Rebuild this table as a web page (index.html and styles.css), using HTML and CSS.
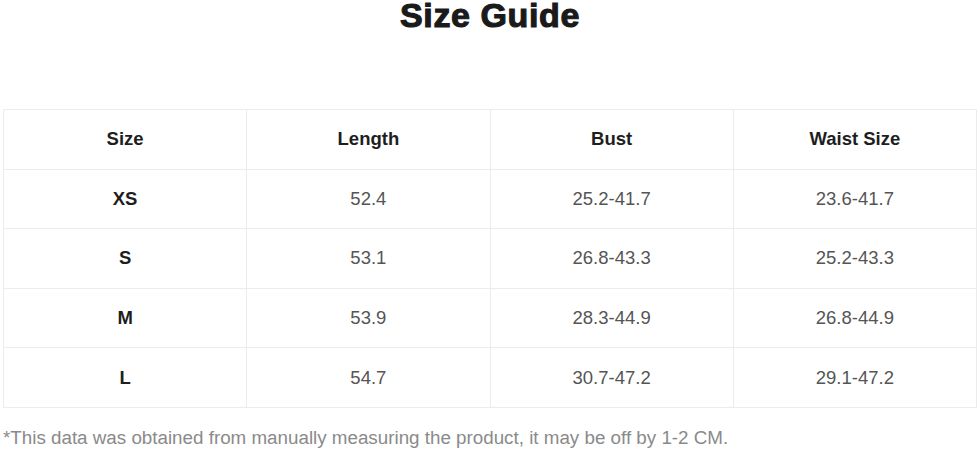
FILE: index.html
```html
<!DOCTYPE html>
<html>
<head>
<meta charset="utf-8">
<link rel="stylesheet" href="styles.css">
</head>
<body>
<div class="page">
  <h1 class="title">Size Guide</h1>
  <table class="sizes">
    <thead>
      <tr><th>Size</th><th>Length</th><th>Bust</th><th>Waist Size</th></tr>
    </thead>
    <tbody>
      <tr><th>XS</th><td>52.4</td><td>25.2-41.7</td><td>23.6-41.7</td></tr>
      <tr><th>S</th><td>53.1</td><td>26.8-43.3</td><td>25.2-43.3</td></tr>
      <tr><th>M</th><td>53.9</td><td>28.3-44.9</td><td>26.8-44.9</td></tr>
      <tr><th>L</th><td>54.7</td><td>30.7-47.2</td><td>29.1-47.2</td></tr>
    </tbody>
  </table>
  <p class="note">*This data was obtained from manually measuring the product, it may be off by 1-2 CM.</p>
</div>
</body>
</html>
```
FILE: styles.css
```css
html, body {
  margin: 0;
  padding: 0;
  background: #fff;
}
.page {
  font-family: "Liberation Sans", Arial, sans-serif;
  padding: 0 2px 0 3px;
}
.title {
  margin: 0;
  text-align: center;
  font-size: 34px;
  line-height: 31px;
  font-weight: 900;
  color: #1a1a1a;
  letter-spacing: 0.6px;
  -webkit-text-stroke: 1.1px #1a1a1a;
  height: 109px;
}
.sizes {
  width: 100%;
  border-collapse: collapse;
  table-layout: fixed;
}
.sizes th, .sizes td {
  border: 1px solid #ececec;
  height: 58.6px;
  padding: 0;
  text-align: center;
  font-size: 18.5px;
}
.sizes th {
  font-weight: bold;
  color: #1e1e1e;
}
.sizes td {
  color: #555;
}
.note {
  margin: 19px 0 0 0;
  font-size: 18.8px;
  color: #8a8a8a;
}
```
